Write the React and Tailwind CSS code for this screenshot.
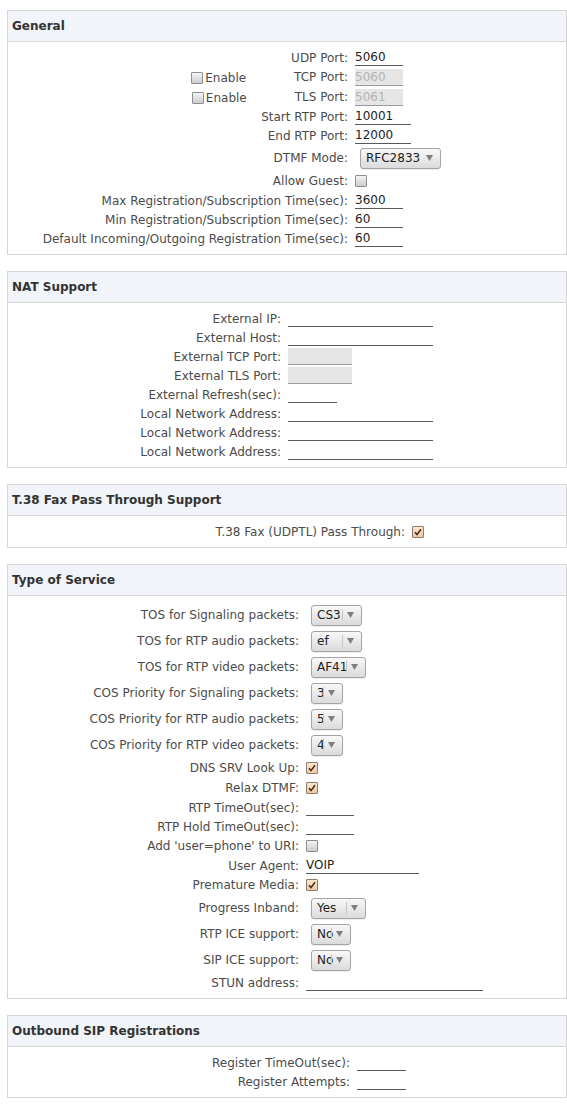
import React from "react"

function Check({ on }) {
  return (
    <span
      className={`inline-flex w-[12px] h-[12px] shrink-0 items-center justify-center border rounded-[1px] ${
        on
          ? "border-[#8d7c6c] bg-linear-to-b from-[#fbe6cf] to-[#eec8a2]"
          : "border-[#8e8e8e] bg-linear-to-b from-[#f5f5f5] to-[#cdcdcd]"
      }`}
    >
      {on && (
        <svg width="8" height="8" viewBox="0 0 8 8">
          <path d="M1 4.3 L3 6.6 L7 1.2" stroke="#3a2a1d" strokeWidth="1.5" fill="none" />
        </svg>
      )}
    </span>
  )
}

function Field({ w, value = "", disabled }) {
  return (
    <div
      className={`${w} h-[17px] border-b leading-[16px] whitespace-nowrap ${
        disabled ? "bg-[#e5e5e5] text-[#b3b3b3] border-[#9c9c9c]" : "text-[#222] border-[#5a5a5a]"
      }`}
    >
      {value}
    </div>
  )
}

function Select({ value, tw, noSep }) {
  return (
    <div className="ml-[5px] h-[21px] inline-flex items-center pl-[5px] pr-[7px] border border-[#a4a4a4] rounded-[3px] bg-linear-to-b from-[#f8f8f8] to-[#dbdbdb] shadow-[0_1px_1px_rgba(0,0,0,0.08)] text-[#222]">
      <span className={`${tw} whitespace-nowrap leading-[16px]`}>{value}</span>
      <span className={`w-px h-[12px] ${noSep ? "bg-transparent" : "bg-[#c6c6c6]"}`} />
      <svg className="ml-[4px]" width="7" height="6" viewBox="0 0 7 6">
        <path d="M0 0H7L3.5 6Z" fill="#7e7e7e" />
      </svg>
    </div>
  )
}

function Row({ lw, h = "h-[19px]", label, pre, children }) {
  return (
    <div className={`flex items-center ${h}`}>
      <div className={`${lw} shrink-0 flex items-center justify-end text-[#4b4b4b]`}>
        {pre}
        <span className="whitespace-nowrap">{label}</span>
      </div>
      <div className="ml-[7px] flex items-center">{children}</div>
    </div>
  )
}

function Enable() {
  return (
    <span className="flex items-center mr-[48px] translate-y-[1px] text-[#4b4b4b]">
      <Check />
      <span className="ml-[2px]">Enable</span>
    </span>
  )
}

function Section({ title, children }) {
  return (
    <section className="ml-[7px] w-[560px] border border-[#d6d6d6] bg-white">
      <div className="h-[31px] bg-[#f1f4f8] border-b border-[#d6d6d6] flex items-center pl-[4px] font-bold text-[#333]">
        {title}
      </div>
      <div className="pt-[6px] pb-[6px]">{children}</div>
    </section>
  )
}

export default function App() {
  const g = "w-[340px]"
  const n = "w-[273px]"
  const t = "w-[291px]"
  const o = "w-[342px]"
  return (
    <div className="min-h-[1110px] bg-white pt-[10px] flex flex-col gap-[16px] font-['DejaVu_Sans',sans-serif] text-[12px] leading-[16px]">
      <Section title="General">
        <Row lw={g} label="UDP Port:"><Field w="w-[48px]" value="5060" /></Row>
        <Row lw={g} h="h-[20px]" pre={<Enable />} label="TCP Port:"><Field w="w-[48px]" value="5060" disabled /></Row>
        <Row lw={g} h="h-[20px]" pre={<Enable />} label="TLS Port:"><Field w="w-[48px]" value="5061" disabled /></Row>
        <Row lw={g} label="Start RTP Port:"><Field w="w-[56px]" value="10001" /></Row>
        <Row lw={g} label="End RTP Port:"><Field w="w-[56px]" value="12000" /></Row>
        <Row lw={g} h="h-[26px]" label="DTMF Mode:"><Select value="RFC2833" tw="w-[55px]" noSep /></Row>
        <Row lw={g} h="h-[20px]" label="Allow Guest:"><Check /></Row>
        <Row lw={g} label="Max Registration/Subscription Time(sec):"><Field w="w-[48px]" value="3600" /></Row>
        <Row lw={g} label="Min Registration/Subscription Time(sec):"><Field w="w-[48px]" value="60" /></Row>
        <Row lw={g} label="Default Incoming/Outgoing Registration Time(sec):"><Field w="w-[48px]" value="60" /></Row>
      </Section>

      <Section title="NAT Support">
        <Row lw={n} label="External IP:"><Field w="w-[145px]" /></Row>
        <Row lw={n} label="External Host:"><Field w="w-[145px]" /></Row>
        <Row lw={n} label="External TCP Port:"><Field w="w-[64px]" disabled /></Row>
        <Row lw={n} label="External TLS Port:"><Field w="w-[64px]" disabled /></Row>
        <Row lw={n} label="External Refresh(sec):"><Field w="w-[49px]" /></Row>
        <Row lw={n} label="Local Network Address:"><Field w="w-[145px]" /></Row>
        <Row lw={n} label="Local Network Address:"><Field w="w-[145px]" /></Row>
        <Row lw={n} label="Local Network Address:"><Field w="w-[145px]" /></Row>
      </Section>

      <Section title="T.38 Fax Pass Through Support">
        <Row lw="w-[397px]" label="T.38 Fax (UDPTL) Pass Through:"><Check on /></Row>
      </Section>

      <Section title="Type of Service">
        <Row lw={t} h="h-[26px]" label="TOS for Signaling packets:"><Select value="CS3" tw="w-[25px]" /></Row>
        <Row lw={t} h="h-[26px]" label="TOS for RTP audio packets:"><Select value="ef" tw="w-[25px]" /></Row>
        <Row lw={t} h="h-[26px]" label="TOS for RTP video packets:"><Select value="AF41" tw="w-[29px]" /></Row>
        <Row lw={t} h="h-[26px]" label="COS Priority for Signaling packets:"><Select value="3" tw="w-[6px]" /></Row>
        <Row lw={t} h="h-[26px]" label="COS Priority for RTP audio packets:"><Select value="5" tw="w-[6px]" /></Row>
        <Row lw={t} h="h-[26px]" label="COS Priority for RTP video packets:"><Select value="4" tw="w-[6px]" /></Row>
        <Row lw={t} h="h-[20px]" label="DNS SRV Look Up:"><Check on /></Row>
        <Row lw={t} h="h-[20px]" label="Relax DTMF:"><Check on /></Row>
        <Row lw={t} label="RTP TimeOut(sec):"><Field w="w-[48px]" /></Row>
        <Row lw={t} label="RTP Hold TimeOut(sec):"><Field w="w-[48px]" /></Row>
        <Row lw={t} h="h-[20px]" label="Add 'user=phone' to URI:"><Check /></Row>
        <Row lw={t} label="User Agent:"><Field w="w-[113px]" value="VOIP" /></Row>
        <Row lw={t} h="h-[20px]" label="Premature Media:"><Check on /></Row>
        <Row lw={t} h="h-[26px]" label="Progress Inband:"><Select value="Yes" tw="w-[29px]" /></Row>
        <Row lw={t} h="h-[26px]" label="RTP ICE support:"><Select value="No" tw="w-[14px]" /></Row>
        <Row lw={t} h="h-[26px]" label="SIP ICE support:"><Select value="No" tw="w-[14px]" /></Row>
        <Row lw={t} label="STUN address:"><Field w="w-[177px]" /></Row>
      </Section>

      <Section title="Outbound SIP Registrations">
        <Row lw={o} label="Register TimeOut(sec):"><Field w="w-[49px]" /></Row>
        <Row lw={o} label="Register Attempts:"><Field w="w-[49px]" /></Row>
      </Section>
    </div>
  )
}
